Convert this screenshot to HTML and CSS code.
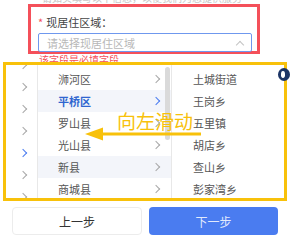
FILE: index.html
```html
<!DOCTYPE html>
<html>

<head>
    <meta charset="utf-8">
    <title>现居住区域</title>
    <meta name="viewport" content="width=device-width, initial-scale=1">
    <link rel="stylesheet" href="styles.css">
</head>

<body>
    <div class="hint-cut">
        <p>请如实填写以下信息，以便我们为您提供服务</p>
    </div>

    <div class="field-frame">
        <div class="field-label"><span class="req">*</span>现居住区域：</div>
        <div class="select-box">
            <span class="placeholder">请选择现居住区域</span>
            <i class="caret-up"></i>
        </div>
    </div>
    <div class="field-error">该字段是必填字段</div>

    <div class="picker-frame">
        <div class="col col-prev">
            <div class="row"><i class="chev"></i></div>
            <div class="row"><i class="chev"></i></div>
            <div class="row"><i class="chev"></i></div>
            <div class="row"><i class="chev"></i></div>
            <div class="row"><i class="chev chev-on"></i></div>
            <div class="row"><i class="chev"></i></div>
            <div class="row"><i class="chev"></i></div>
        </div>
        <div class="col col-city">
            <div class="row">浉河区<i class="chev"></i></div>
            <div class="row row-on active">平桥区<i class="chev chev-on"></i></div>
            <div class="row">罗山县<i class="chev"></i></div>
            <div class="row">光山县<i class="chev"></i></div>
            <div class="row row-on">新县<i class="chev"></i></div>
            <div class="row">商城县<i class="chev"></i></div>
            <div class="scroll-thumb"></div>
        </div>
        <div class="col col-town">
            <div class="row">土城街道</div>
            <div class="row">王岗乡</div>
            <div class="row">五里镇</div>
            <div class="row">胡店乡</div>
            <div class="row">查山乡</div>
            <div class="row">彭家湾乡</div>
        </div>

        <!-- 标注：向左滑动 -->
        <div class="swipe-text">向左滑动</div>
        <svg class="swipe-arrow" width="118" height="18" viewBox="0 0 118 18">
            <polygon points="1,10 19,3.5 19,16.5" fill="#f8c10a" />
            <rect x="17" y="8.5" width="100" height="3" fill="#f8c10a" />
        </svg>
    </div>

    <div class="float-btn"><span></span></div>

    <div class="actions">
        <button class="btn btn-prev">上一步</button>
        <button class="btn btn-next">下一步</button>
    </div>
</body>

</html>
```

FILE: styles.css
```css
body {
    margin: 0;
    background-color: white;
    font-family: "Noto Sans CJK SC", "Noto Sans", sans-serif;
    color: #555;
    position: relative;
    overflow: hidden;
}

.hint-cut {
    height: 4px;
    overflow: hidden;
    padding-left: 42px;
}

.hint-cut p {
    margin: -8px 0 0 0;
    font-size: 10px;
    line-height: 12px;
    color: #c8c8c8;
}

.field-frame {
    margin-left: 28px;
    width: 232px;
    height: 50px;
    box-sizing: border-box;
    border: 3px solid #f4505a;
    padding: 8px 5px 0 7px;
}

.field-label {
    font-size: 11px;
    line-height: 14px;
    color: #444;
}

.req {
    color: #f4505a;
    margin-right: 3px;
}

.select-box {
    margin-top: 4px;
    height: 19px;
    box-sizing: border-box;
    border: 1px solid #6f98ee;
    border-radius: 2px;
    display: flex;
    align-items: center;
    padding: 0 8px;
}

.placeholder {
    font-size: 11px;
    color: #b8b8b8;
    flex: 1;
}

.caret-up {
    width: 5px;
    height: 5px;
    border-left: 1px solid #c4c4c4;
    border-top: 1px solid #c4c4c4;
    transform: rotate(45deg);
    margin-top: 4px;
}

.field-error {
    height: 8px;
    overflow: hidden;
    margin-left: 39px;
    padding-top: 1px;
    box-sizing: border-box;
    font-size: 10px;
    line-height: 10px;
    color: #f4505a;
}

.float-btn {
    position: absolute;
    top: 68px;
    left: 278px;
    width: 12px;
    height: 13px;
    border-radius: 50%;
    background-color: #1c3566;
}

.float-btn span {
    position: absolute;
    top: 3px;
    left: 3px;
    width: 4px;
    height: 7px;
    border-radius: 40%;
    background-color: white;
}

.picker-frame {
    position: relative;
    margin-left: 3px;
    width: 284px;
    height: 139px;
    box-sizing: border-box;
    border: 3px solid #f8c10a;
    display: flex;
    overflow: hidden;
    background-color: white;
}

.col {
    position: relative;
    font-size: 11px;
}

.row {
    height: 22px;
    display: flex;
    align-items: center;
}

.col-prev {
    width: 31px;
    border-right: 1px solid #e8e8e8;
    margin-top: -11px;
}

.col-prev .row {
    justify-content: center;
    padding-left: 2px;
}

.col-city {
    width: 133px;
    border-right: 1px solid #e8e8e8;
    padding-top: 3px;
}

.col-city .row {
    padding: 0 12px 0 20px;
    color: #555;
}

.col-city .chev {
    margin-left: auto;
}

.row-on {
    background-color: #f3f5fa;
}

.active {
    color: #2f66d0 !important;
    font-weight: bold;
}

.col-town {
    flex: 1;
    padding-top: 3px;
}

.col-town .row {
    padding-left: 21px;
    color: #555;
}

.chev {
    width: 5px;
    height: 5px;
    border-right: 1px solid #a8a8a8;
    border-top: 1px solid #a8a8a8;
    transform: rotate(45deg);
}

.chev-on {
    border-color: #4a7cf0;
}

.scroll-thumb {
    position: absolute;
    left: 127px;
    top: 2px;
    width: 5px;
    height: 73px;
    border-radius: 3px;
    background-color: #dadada;
}

.swipe-text {
    position: absolute;
    left: 111px;
    top: 46px;
    font-size: 19px;
    line-height: 19px;
    color: #f8c10a;
}

.swipe-arrow {
    position: absolute;
    left: 78px;
    top: 59px;
}

.actions {
    display: flex;
    gap: 7px;
    margin-top: 6px;
    padding-left: 12px;
}

.btn {
    height: 28px;
    border-radius: 4px;
    font-family: "Noto Sans CJK SC", "Noto Sans", sans-serif;
    font-size: 12px;
    padding: 0;
}

.btn-prev {
    width: 130px;
    background-color: white;
    border: 1px solid #ececec;
    color: #333;
}

.btn-next {
    width: 129px;
    background-color: #4a7cf0;
    border: none;
    color: #e2eafc;
}
```
